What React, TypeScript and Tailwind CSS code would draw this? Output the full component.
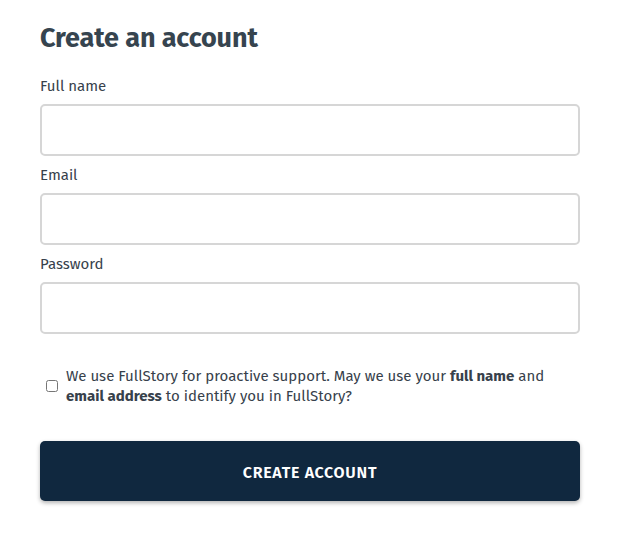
import React from "react";

export default function App() {
  const font = { fontFamily: '"Fira Sans", "Open Sans", "Noto Sans", sans-serif' };
  return (
    <div className="w-[620px] h-[540px] bg-white text-[#37414b]" style={font}>
      <div className="px-10 pt-[22px]">
        <h1 className="text-[27px] leading-[32px] font-bold text-[#36444f] tracking-[-0.1px]">Create an account</h1>
        <div className="mt-[22px] flex flex-col">
          <label className="text-[15px] leading-[20px] text-[#37414b]">Full name</label>
          <input className="mt-[8px] h-[52px] w-full rounded-[5px] border-2 border-[#d6d6d6] outline-none" />
          <label className="mt-[9px] text-[15px] leading-[20px] text-[#37414b]">Email</label>
          <input className="mt-[8px] h-[52px] w-full rounded-[5px] border-2 border-[#d6d6d6] outline-none" />
          <label className="mt-[9px] text-[15px] leading-[20px] text-[#37414b]">Password</label>
          <input type="password" className="mt-[8px] h-[52px] w-full rounded-[5px] border-2 border-[#d6d6d6] outline-none" />
        </div>
        <div className="mt-[32px] flex items-center gap-[8px] pl-[6px]">
          <input type="checkbox" className="h-[12px] w-[12px] shrink-0" />
          <p className="text-[15px] leading-[20px] text-[#37414b]">
            We use FullStory for proactive support. May we use your <b>full name</b> and{" "}
            <b>email address</b> to identify you in FullStory?
          </p>
        </div>
        <button className="mt-[35px] h-[60px] w-full rounded-[5px] bg-[#10283f] pt-[3px] text-white text-[16px] font-semibold tracking-[0.7px] shadow-[0_2px_4px_rgba(0,0,0,0.3)]">
          CREATE ACCOUNT
        </button>
      </div>
    </div>
  );
}
